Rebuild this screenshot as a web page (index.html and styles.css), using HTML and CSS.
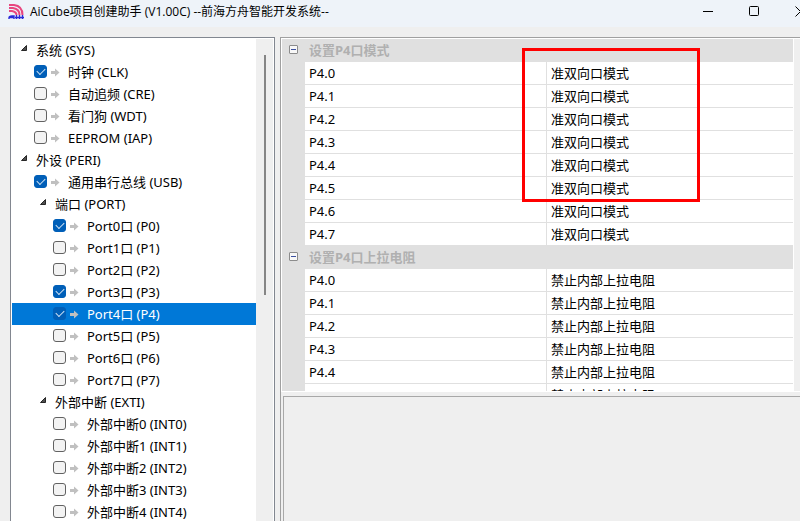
FILE: index.html
```html
<!DOCTYPE html>
<html lang="zh-CN">
    <head>
        <meta charset="UTF-8">
        <meta name="viewport" content="width=device-width, initial-scale=1.0">
        <title>AiCube项目创建助手</title>
        <link rel="stylesheet" href="styles.css">
    </head>
    <body>
        <svg class="d-none">
            <symbol id="arrow" viewBox="0 0 9 9">
                <path d="M0 3h4V0.5L8.5 4.5L4 8.5V6H0z" fill="currentColor"/>
            </symbol>
            <symbol id="open" viewBox="0 0 7 7">
                <path d="M5.5 0.5V5.5H0.5z" fill="#505050" stroke="#262626"/>
            </symbol>
        </svg>

        <header class="titlebar">
            <svg class="logo" viewBox="0 0 16 16" fill="none">
                <g stroke="#e8477f" stroke-width="2">
                    <path d="M1 1h5Q14.500 2 14.500 11"/>
                    <path d="M1 4h4Q11.500 5 11.500 11"/>
                    <path d="M1 7h3Q8.500 8 8.500 11"/>
                </g>
                <g stroke="#2a2ad8" stroke-width="1.4">
                    <path d="M1 15v-1q0-2 3-2h2v3M1 13.500h5"/>
                    <path d="M8.500 11v4M11.500 11v4M14.500 11v4M7 13.500h9"/>
                </g>
            </svg>
            <h1>AiCube项目创建助手 (V1.00C) --前海方舟智能开发系统--</h1>
            <div class="caption">
                <button type="button" aria-label="最小化"><svg viewBox="0 0 11 11"><path d="M0 5.500h10"/></svg></button>
                <button type="button" aria-label="最大化"><svg viewBox="0 0 11 11"><rect x="0.500" y="0.500" width="9" height="9" rx="1"/></svg></button>
                <button type="button" aria-label="关闭"><svg viewBox="0 0 11 11"><path d="M0.500 0.500l10 10M10.500 0.500l-10 10"/></svg></button>
            </div>
        </header>

        <main>
            <nav class="tree">
                <ul id="tree"></ul>
                <div class="scrollbar"><div class="thumb"></div></div>
            </nav>

            <section class="right">
                <div class="grid">
                    <table>
                        <colgroup><col class="gutter"><col class="name"><col></colgroup>
                        <tbody id="grid"></tbody>
                    </table>
                    <div class="scrollbar"></div>
                    <div class="mark"></div>
                </div>
                <div class="help"></div>
            </section>
        </main>

        <script src="script.js"></script>
    </body>
</html>
```
FILE: styles.css
```css
*{
    box-sizing: border-box;
}
body{
    margin: 0;
    height: 100vh;
    display: flex;
    flex-direction: column;
    overflow: hidden;
    background-color: #efefef;
    color: #000;
    font-family: "Noto Sans", "Noto Sans CJK SC", sans-serif;
    font-size: 13px;
    line-height: 22px;
}
button{
    padding: 0;
    border: 0;
    background: none;
}
ul{
    margin: 0;
    padding: 0;
    list-style: none;
}
.d-none{
    display: none;
}

/* title bar */
.titlebar{
    flex: none;
    display: flex;
    align-items: center;
    gap: 6px;
    height: 27px;
    padding: 0 0 4px 8px;
    overflow: hidden;
    background-color: #eef3f9;
}
.titlebar h1{
    margin: 0;
    font-family: "Open Sans", "Noto Sans CJK SC", sans-serif;
    font-size: 12px;
    font-weight: normal;
    white-space: nowrap;
}
.logo{
    width: 16px;
    height: 16px;
}
.caption{
    display: flex;
    margin-left: auto;
    margin-right: -23px;
}
.caption button{
    display: flex;
    align-items: center;
    justify-content: center;
    width: 46px;
    height: 23px;
}
.caption svg{
    width: 11px;
    height: 11px;
    fill: none;
    stroke: #000;
}

/* panels */
main{
    flex: 1;
    min-height: 0;
    display: flex;
    gap: 5px;
    padding: 10px 0 0 10px;
}
.scrollbar{
    flex: none;
    width: 17px;
    background-color: #efefef;
}
.thumb{
    width: 2px;
    height: 240px;
    margin: 16px 0 0 8px;
    background-color: #858585;
}
.tree{
    flex: none;
    display: flex;
    width: 265px;
    padding: 1px 1px 0;
    border: 1px solid #828790;
    border-bottom: 0;
    background-color: #fff;
    overflow: hidden;
}
.tree > ul{
    flex: 1;
}
.row{
    display: flex;
    align-items: center;
    height: 22px;
    white-space: nowrap;
}
.group{
    gap: 8px;
    padding-left: 9px;
}
.item{
    padding-left: 22px;
}
.tree ul ul ul .item{
    padding-left: 41px;
}
.tree ul ul .group{
    padding-left: 28px;
}
.group button{
    display: flex;
    width: 7px;
    height: 11px;
}
.group svg{
    width: 7px;
    height: 7px;
}
.item svg{
    width: 9px;
    height: 9px;
    margin: 0 8px 0 4px;
    color: #c0c0c0;
}
.selected{
    background-color: #0078d7;
    color: #fff;
}
input{
    appearance: none;
    display: flex;
    align-items: center;
    justify-content: center;
    width: 13px;
    height: 13px;
    margin: 0 0 1px;
    border: 1px solid #626262;
    border-radius: 3px;
    background-color: #f3f3f3;
}
input:checked{
    border-color: #005fb8;
    background-color: #005fb8;
}
input:checked::after{
    content: "";
    width: 7px;
    height: 4px;
    margin-bottom: 2px;
    border: solid #cfe2f3;
    border-width: 0 0 1px 1px;
    transform: rotate(-45deg);
}

/* property grid */
.right{
    flex: 1;
    min-width: 0;
    display: flex;
    flex-direction: column;
    border: solid #a0a0a0;
    border-width: 1px 0 0 1px;
}
.grid{
    flex: 17 1 0;
    position: relative;
    display: flex;
    align-items: flex-start;
    min-height: 0;
    padding: 1px 0 0 1px;
    border-bottom: 1px solid #fff;
    background-color: #fff;
    overflow: hidden;
}
.grid > .scrollbar{
    align-self: stretch;
    margin-left: 1px;
    margin-right: -11px;
}
table{
    flex: 1;
    table-layout: fixed;
    width: 100%;
    border-spacing: 0;
}
.gutter{
    width: 23px;
}
.name{
    width: 242px;
}
td, th{
    height: 23px;
    padding: 0 4px;
    border-bottom: 1px solid #e0e0e0;
    font-weight: normal;
    text-align: left;
    white-space: nowrap;
}
th[scope="row"]{
    border-right: 1px solid #e0e0e0;
}
.side, .category td, .category th{
    background-color: #e0e0e0;
}
.category th{
    color: #b0b0b0;
    font-weight: bold;
}
.category button{
    display: flex;
    align-items: center;
    justify-content: center;
    width: 9px;
    height: 9px;
    margin: 0 0 2px 3px;
    border: 1px solid #8c8c8c;
    border-radius: 1px;
    background-color: #f8f8f8;
}
.category button::after{
    content: "";
    width: 5px;
    height: 1px;
    background-color: #3c50a0;
}
.mark{
    position: absolute;
    top: 10px;
    left: 241px;
    width: 178px;
    height: 154px;
    border: 3px solid #f00;
}
.help{
    flex: 6 1 0;
    margin: 4px 0 0 2px;
    border: solid #a8a8a8;
    border-width: 1px 0 0 1px;
}
```
FILE: script.js
```javascript
var nodes = [
    { text: '系统 (SYS)', children: [
        { text: '时钟 (CLK)', checked: true },
        { text: '自动追频 (CRE)' },
        { text: '看门狗 (WDT)' },
        { text: 'EEPROM (IAP)' }
    ]},
    { text: '外设 (PERI)', children: [
        { text: '通用串行总线 (USB)', checked: true },
        { text: '端口 (PORT)', children: [
            { text: 'Port0口 (P0)', checked: true },
            { text: 'Port1口 (P1)' },
            { text: 'Port2口 (P2)' },
            { text: 'Port3口 (P3)', checked: true },
            { text: 'Port4口 (P4)', checked: true, selected: true },
            { text: 'Port5口 (P5)' },
            { text: 'Port6口 (P6)' },
            { text: 'Port7口 (P7)' }
        ]},
        { text: '外部中断 (EXTI)', children: [
            { text: '外部中断0 (INT0)' },
            { text: '外部中断1 (INT1)' },
            { text: '外部中断2 (INT2)' },
            { text: '外部中断3 (INT3)' },
            { text: '外部中断4 (INT4)' }
        ]}
    ]}
];

var categories = [
    { text: '设置P4口模式', value: '准双向口模式', count: 8 },
    { text: '设置P4口上拉电阻', value: '禁止内部上拉电阻', count: 6 }
];

function TreeHtml(list){
    var html = '';
    list.forEach(function(node){
        if(node.children){
            html += '<li><div class="row group"><button type="button" aria-label="折叠"><svg><use href="#open"/></svg></button>'
                + node.text + '</div><ul>' + TreeHtml(node.children) + '</ul></li>';
        }
        else{
            html += '<li><label class="row item' + (node.selected ? ' selected' : '') + '">'
                + '<input type="checkbox"' + (node.checked ? ' checked' : '') + '>'
                + '<svg><use href="#arrow"/></svg>' + node.text + '</label></li>';
        }
    });
    return html;
}

function GridHtml(){
    var html = '';
    categories.forEach(function(cat){
        html += '<tr class="category"><td><button type="button" aria-label="折叠"></button></td>'
            + '<th colspan="2">' + cat.text + '</th></tr>';
        for(var i = 0; i < cat.count; i++){
            html += '<tr><td class="side"></td><th scope="row">P4.' + i + '</th><td>' + cat.value + '</td></tr>';
        }
    });
    return html;
}

document.getElementById('tree').innerHTML = TreeHtml(nodes);
document.getElementById('grid').innerHTML = GridHtml();
```
